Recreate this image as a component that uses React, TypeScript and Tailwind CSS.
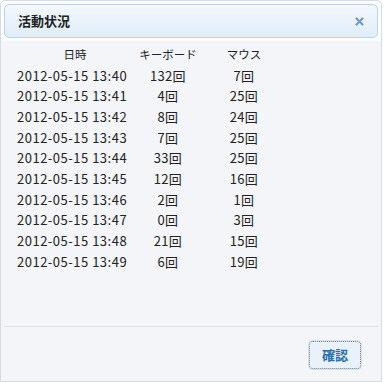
import React from 'react';

const rows = [
  ['2012-05-15 13:40', '132回', '7回'],
  ['2012-05-15 13:41', '4回', '25回'],
  ['2012-05-15 13:42', '8回', '24回'],
  ['2012-05-15 13:43', '7回', '25回'],
  ['2012-05-15 13:44', '33回', '25回'],
  ['2012-05-15 13:45', '12回', '16回'],
  ['2012-05-15 13:46', '2回', '1回'],
  ['2012-05-15 13:47', '0回', '3回'],
  ['2012-05-15 13:48', '21回', '15回'],
  ['2012-05-15 13:49', '6回', '19回'],
];

export default function App() {
  return (
    <div
      className="w-[384px] h-[382px] bg-white"
      style={{ fontFamily: '"Noto Sans CJK JP", "Noto Sans", sans-serif' }}
    >
      <div className="w-[382px] h-[382px] border border-[#d8dce2] rounded-t-[5px] bg-[#f3f5f8] flex flex-col">
        {/* Title bar */}
        <div className="bg-[#fbfcfd] px-[3px] pt-[3px] pb-[3px] rounded-t-[5px]">
          <div className="h-[34px] flex items-center justify-between pl-[13px] pr-[13px] rounded-[5px] border border-[#b9d3ea] bg-gradient-to-b from-[#f3f8fd] to-[#dfedf8]">
            <span className="text-[13px] font-bold text-[#222]">活動状況</span>
            <svg width="9" height="9" viewBox="0 0 9 9" className="mt-[1px]">
              <path d="M1.5 1.5 L7.5 7.5 M7.5 1.5 L1.5 7.5" stroke="#6f9cc4" strokeWidth="2.2" strokeLinecap="round" />
            </svg>
          </div>
        </div>

        {/* Content */}
        <div className="flex-1 pl-[16px] pt-[3px] text-[13px] text-[#222]">
          <table className="border-collapse">
            <thead>
              <tr className="h-[21px] text-[11.5px]">
                <th className="w-[116px] font-normal text-center">日時</th>
                <th className="w-[70px] font-normal text-center">キーボード</th>
                <th className="w-[80px] font-normal text-center pl-[2px]">マウス</th>
              </tr>
            </thead>
            <tbody>
              {rows.map((r) => (
                <tr key={r[0]} className="h-[20.7px]">
                  <td className="text-left whitespace-nowrap tracking-[0.5px]">{r[0]}</td>
                  <td className="text-center tracking-[0.3px]">{r[1]}</td>
                  <td className="text-center tracking-[0.3px] pl-[2px]">{r[2]}</td>
                </tr>
              ))}
            </tbody>
          </table>
        </div>

        {/* Footer */}
        <div className="mx-[3px] border-t border-[#dde1e6] h-[55px] flex items-center justify-end pr-[17px]">
          <button className="w-[52px] h-[28px] mt-[1px] rounded-[4px] border border-dotted border-[#777] bg-[#e9f2fa] text-[13px] font-bold text-[#2a6ea6] shadow-[0_0_0_1px_#cfe2f2]">
            確認
          </button>
        </div>
      </div>
    </div>
  );
}
